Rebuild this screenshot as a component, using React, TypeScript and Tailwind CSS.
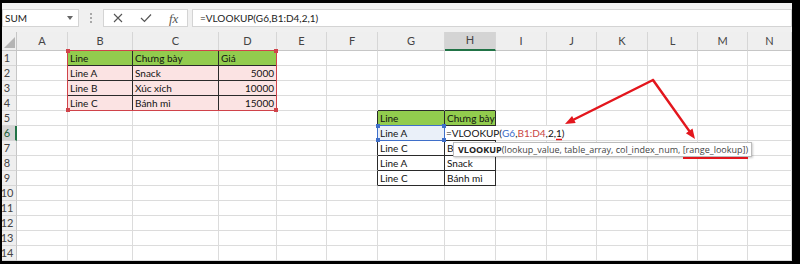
import React from "react";

type CellData = { text?: React.ReactNode; bg?: string; right?: boolean };

const COLS = ["A", "B", "C", "D", "E", "F", "G", "H", "I", "J", "K", "L", "M", "N"];
const ROWS = [1, 2, 3, 4, 5, 6, 7, 8, 9, 10, 11, 12, 13, 14];

const green = "bg-[#92cc4e]";
const pink = "bg-[#fbe3e3]";

const cells: Record<string, CellData> = {
  B1: { text: "Line", bg: green },
  C1: { text: "Chưng bày", bg: green },
  D1: { text: "Giá", bg: green },
  B2: { text: "Line A", bg: pink },
  C2: { text: "Snack", bg: pink },
  D2: { text: "5000", bg: pink, right: true },
  B3: { text: "Line B", bg: pink },
  C3: { text: "Xúc xích", bg: pink },
  D3: { text: "10000", bg: pink, right: true },
  B4: { text: "Line C", bg: pink },
  C4: { text: "Bánh mì", bg: pink },
  D4: { text: "15000", bg: pink, right: true },
  G5: { text: "Line", bg: green },
  H5: { text: "Chưng bày", bg: green },
  G6: { text: "Line A", bg: "bg-[#eaf0f9]" },
  G7: { text: "Line C" },
  H7: { text: "B" },
  G8: { text: "Line A" },
  H8: { text: "Snack" },
  G9: { text: "Line C" },
  H9: { text: "Bánh mì" },
};

// ranges drawn with dark borders
const inTable = (r: number, c: number) =>
  (r >= 1 && r <= 4 && c >= 1 && c <= 3) || (r >= 5 && r <= 9 && c >= 6 && c <= 7);

function Formula() {
  return (
    <span className="absolute left-0 top-0 h-full pl-[1px] pr-[3px] flex items-center bg-white whitespace-nowrap z-10 text-[#111]">
      =VLOOKUP(<span className="text-[#3b6cc8]">G6</span>,<span className="text-[#c8463f]">B1:D4</span>,2,1)
    </span>
  );
}

function FormulaBar() {
  return (
    <div className="h-[29px] bg-[#f0f0f0] flex items-start pt-[6px]">
      <div className="w-[77px] h-[18px] bg-white border border-[#d4d4d4] flex items-center justify-between pl-[2px] pr-[5px] text-[10px] text-[#222]">
        <span>SUM</span>
        <svg width="6" height="4" viewBox="0 0 6 4"><path d="M0 0h6L3 4z" fill="#666" /></svg>
      </div>
      <div className="w-[24px] h-[18px] flex flex-col items-center justify-center gap-[2px]">
        <span className="w-[2px] h-[2px] bg-[#a8a8a8]" />
        <span className="w-[2px] h-[2px] bg-[#a8a8a8]" />
        <span className="w-[2px] h-[2px] bg-[#a8a8a8]" />
      </div>
      <div className="w-[85px] h-[18px] bg-white border border-[#d4d4d4] flex items-center pl-[9px] gap-[17px]">
        <svg width="10" height="10" viewBox="0 0 10 10"><path d="M1 1l8 8M9 1l-8 8" stroke="#555" strokeWidth="1.1" /></svg>
        <svg width="12" height="10" viewBox="0 0 12 10"><path d="M1 5l3.5 3.5L11 1.5" stroke="#555" strokeWidth="1.2" fill="none" /></svg>
        <span className="text-[13px] italic text-[#555] leading-none" style={{ fontFamily: '"Liberation Serif", serif' }}>fx</span>
      </div>
      <div className="ml-[4px] flex-1 h-[18px] bg-white border border-[#d4d4d4] flex items-center pl-[7px] text-[10px] text-[#222]">
        =VLOOKUP(G6,B1:D4,2,1)
      </div>
    </div>
  );
}

export default function App() {
  return (
    <div
      className="relative w-[800px] h-[264px] bg-black pt-[3px] pl-[2px] pr-[8px] pb-[3px] overflow-hidden"
      style={{ fontFamily: 'Lato, "Open Sans", sans-serif' }}
    >
      <div className="bg-white h-full flex flex-col">
        <FormulaBar />
        <div className="grid grid-cols-[15px_51px_65px_86px_58px_50px_51px_67px_51px_51px_50px_51px_50px_50px_44px] grid-rows-[19px_repeat(14,15px)] text-[10px] text-[#111]">
          {/* corner */}
          <div className="bg-[#efefef] border-r border-b border-[#c6c6c6] flex items-end justify-end pr-[1px] pb-[2px]">
            <svg width="11" height="11" viewBox="0 0 11 11"><path d="M11 0v11H0z" fill="#b5b5b5" /></svg>
          </div>
          {COLS.map((c) => (
            <div
              key={c}
              className={`flex items-center justify-center text-[11px] text-[#444] border-r border-r-[#d6d6d6] ${
                c === "H"
                  ? "bg-[#d4d4d4] border-b-2 border-b-[#217346] text-[#1d5f3a]"
                  : "bg-[#efefef] border-b border-b-[#c6c6c6]"
              }`}
            >
              {c}
            </div>
          ))}
          {ROWS.map((r) => (
            <React.Fragment key={r}>
              <div
                className={`overflow-hidden flex items-center text-[11px] border-b border-b-[#d6d6d6] ${
                  r === 6 ? "bg-[#d4d4d4] border-r-2 border-r-[#217346] text-[#1d5f3a]" : "bg-[#efefef] border-r border-r-[#c6c6c6] text-[#444]"
                }`}
              >
                <div className="w-[10px] flex justify-center shrink-0">
                  <span className="whitespace-nowrap">{r}</span>
                </div>
              </div>
              {COLS.map((c, ci) => {
                const key = `${c}${r}`;
                const d = cells[key];
                const rb = inTable(r, ci) || inTable(r, ci + 1);
                const bb = inTable(r, ci) || inTable(r + 1, ci);
                return (
                  <div
                    key={key}
                    className={`relative flex items-center whitespace-nowrap overflow-hidden border-r border-b ${
                      rb ? "border-r-[#2a2a2a]" : "border-r-[#dcdcdc]"
                    } ${bb ? "border-b-[#2a2a2a]" : "border-b-[#dcdcdc]"} ${d?.bg ?? ""} ${
                      d?.right ? "justify-end pr-[2px]" : "pl-[2px]"
                    } ${key === "H6" ? "overflow-visible" : ""}`}
                  >
                    {key === "H6" ? <Formula /> : d?.text}
                  </div>
                );
              })}
            </React.Fragment>
          ))}
        </div>
      </div>

      {/* reference highlight B1:D4 */}
      <div className="absolute left-[67px] top-[50px] w-[210px] h-[61px] border border-[#d0434a] pointer-events-none">
        <span className="absolute -left-[2px] -top-[2px] w-[4px] h-[4px] bg-[#d0434a]" />
        <span className="absolute -right-[2px] -top-[2px] w-[4px] h-[4px] bg-[#d0434a]" />
        <span className="absolute -left-[2px] -bottom-[2px] w-[4px] h-[4px] bg-[#d0434a]" />
        <span className="absolute -right-[2px] -bottom-[2px] w-[4px] h-[4px] bg-[#d0434a]" />
      </div>

      {/* reference highlight G6 */}
      <div className="absolute left-[377px] top-[125px] w-[68px] h-[16px] border border-[#3f6fc9] pointer-events-none z-20">
        <span className="absolute -left-[2px] -top-[2px] w-[4px] h-[4px] bg-[#3f6fc9]" />
        <span className="absolute -right-[2px] -top-[2px] w-[4px] h-[4px] bg-[#3f6fc9]" />
        <span className="absolute -left-[2px] -bottom-[2px] w-[4px] h-[4px] bg-[#3f6fc9]" />
        <span className="absolute -right-[2px] -bottom-[2px] w-[4px] h-[4px] bg-[#3f6fc9]" />
      </div>

      {/* function tooltip */}
      <div
        className="absolute left-[453px] top-[142px] h-[15px] pl-[4px] pr-[3px] bg-white border border-[#bcbcbc] shadow-[1px_1px_2px_rgba(0,0,0,0.2)] flex items-center text-[9px] text-[#444] whitespace-nowrap z-20"
        style={{ fontFamily: '"Open Sans", sans-serif' }}
      >
        <span className="font-bold text-[#222]">VLOOKUP</span>(lookup_value, table_array, col_index_num, [range_lookup])
      </div>

      {/* annotation arrows */}
      <svg className="absolute left-0 top-0 z-30 pointer-events-none" width="800" height="264">
        <path d="M653 80L573.9 119.5M653 80L689.2 130.9" stroke="#e3161d" strokeWidth="2.5" strokeLinecap="round" fill="none" />
        <path d="M565 124L575.7 123.1L572.1 115.9z" fill="#e3161d" />
        <path d="M695 139L685.9 133.2L692.5 128.5z" fill="#e3161d" />
        <path d="M683 158H748" stroke="#e3161d" strokeWidth="2" />
        <path d="M556 139.5H562" stroke="#e3161d" strokeWidth="1.5" />
      </svg>
    </div>
  );
}
